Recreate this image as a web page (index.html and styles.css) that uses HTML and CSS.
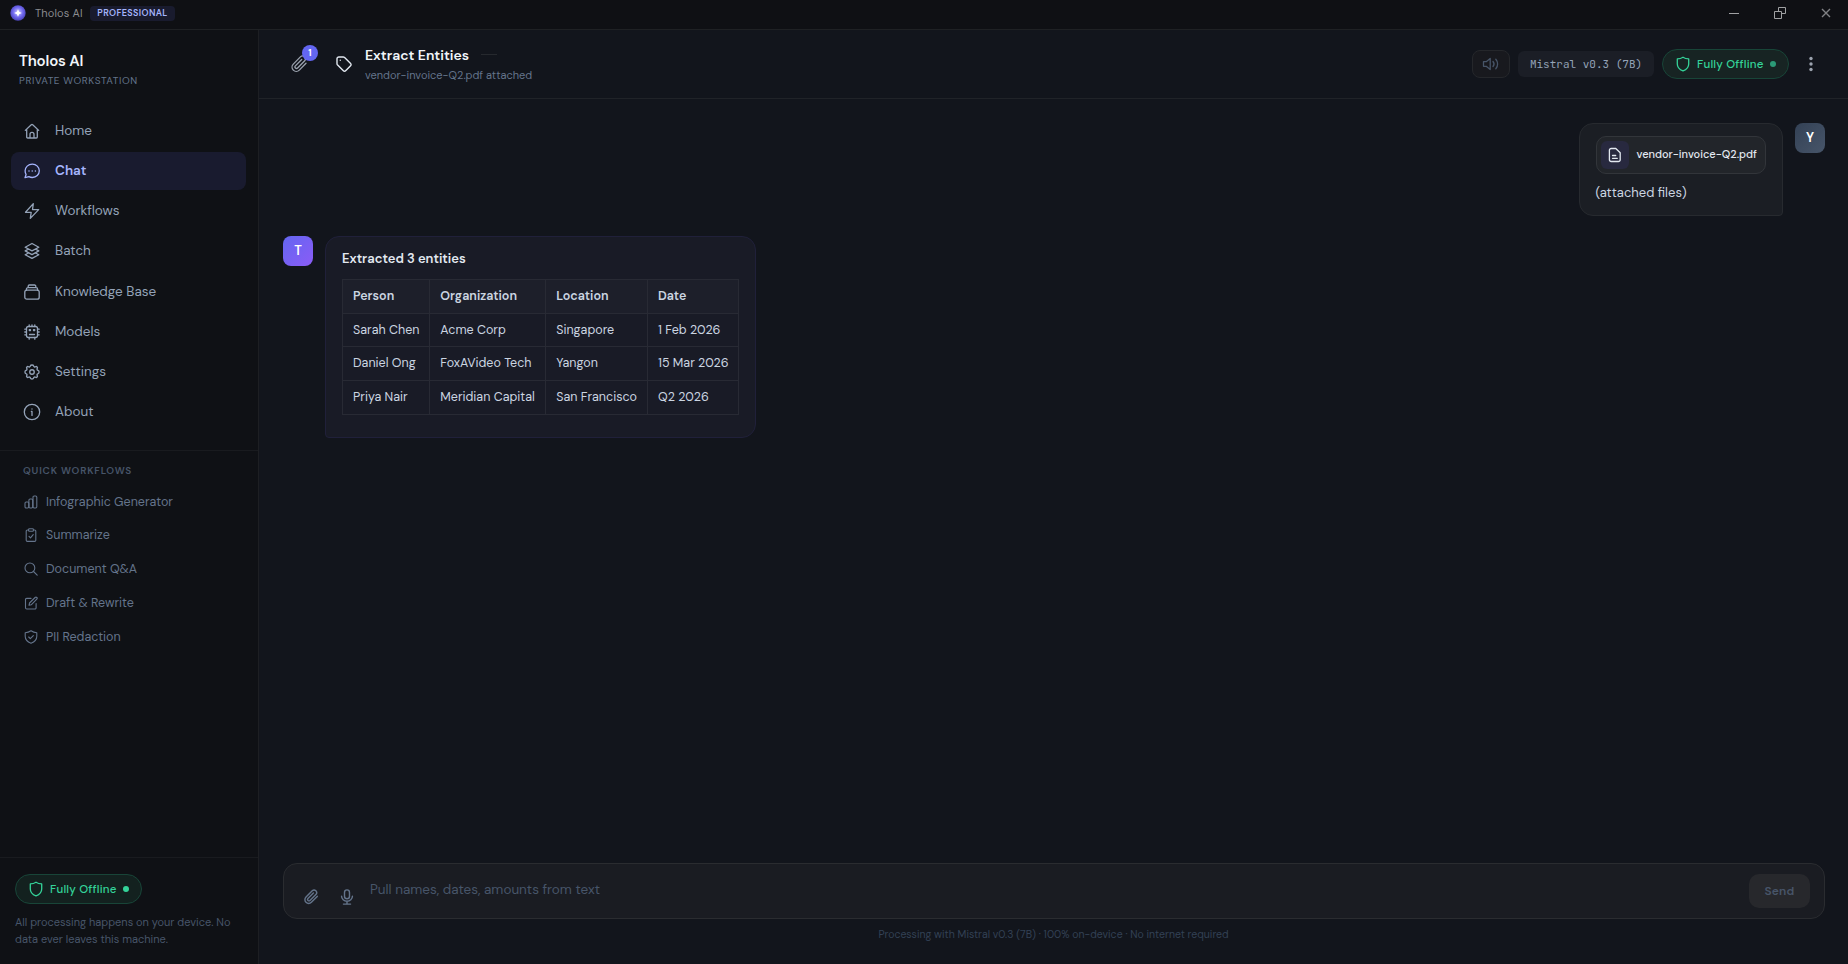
FILE: index.html
```html
<!DOCTYPE html>
<html lang="en">
<head>
  <meta charset="UTF-8">
  <title>Tholos AI</title>
  <link rel="stylesheet" href="styles.css">
</head>
<body>
  <div class="titlebar">
    <svg class="app-logo" viewBox="0 0 16 16">
      <defs>
        <radialGradient id="orb" cx="50%" cy="45%" r="55%">
          <stop offset="0" stop-color="#c9c5ff"/>
          <stop offset="0.6" stop-color="#6f67ee"/>
          <stop offset="1" stop-color="#4a43b8"/>
        </radialGradient>
      </defs>
      <circle cx="8" cy="8" r="7.7" fill="url(#orb)"/>
      <path d="M8 4.200 9.200 6.800 11.800 8 9.200 9.200 8 11.800 6.800 9.200 4.200 8 6.800 6.800Z" fill="#fff"/>
    </svg>
    <span class="app-name">Tholos AI</span>
    <span class="plan">PROFESSIONAL</span>
    <div class="window-buttons">
      <svg viewBox="0 0 12 12"><path d="M1 6.5h10"/></svg>
      <svg viewBox="0 0 12 12"><path d="M4.5 4.5v-4h7v6h-4M.5 4.5h7v7h-7z"/></svg>
      <svg class="close" viewBox="0 0 12 12"><path d="m2 2 8 8M10 2 2 10"/></svg>
    </div>
  </div>

  <div class="app">
    <div class="sidebar">
      <div class="brand">
        <div class="brand-name">Tholos AI</div>
        <div class="brand-sub">PRIVATE WORKSTATION</div>
      </div>

      <div class="nav">
        <a class="nav-item">
          <svg viewBox="0 0 18 18"><path d="m2.300 8.400 6-5.700a1.100 1.100 0 0 1 1.400 0l6 5.700M3.700 7.200V15a1 1 0 0 0 1 1h8.600a1 1 0 0 0 1-1V7.200M7 16v-3.600a2 2 0 0 1 4 0V16"/></svg>
          <span>Home</span>
        </a>
        <a class="nav-item active">
          <svg viewBox="0 0 18 18"><path d="M9.300 2.200c4 0 7 2.900 7 6.600s-3 6.700-7 6.700c-1.300 0-2.400-.3-3.400-.8L2 15.600l1.100-3.100c-.7-1.100-1-2.300-1-3.700 0-3.700 3.100-6.600 7.200-6.600Z"/><path d="M6 8.900h.01M9.200 8.900h.01M12.400 8.900h.01" class="dots"/></svg>
          <span>Chat</span>
        </a>
        <a class="nav-item">
          <svg viewBox="0 0 18 18"><path d="M10.300 1.600 2.500 10.300h5.700L7.300 16.400 15.700 7.600H9.500Z"/></svg>
          <span>Workflows</span>
        </a>
        <a class="nav-item">
          <svg viewBox="0 0 18 18"><path d="M9 1.500 2.200 5.200 9 8.900l6.800-3.700ZM5 7.400 2.200 8.900 9 12.600l6.800-3.700L13 7.400M5 11.200l-2.800 1.500L9 16.400l6.800-3.700-2.800-1.500"/></svg>
          <span>Batch</span>
        </a>
        <a class="nav-item">
          <svg viewBox="0 0 18 18"><rect x="1.800" y="7.200" width="14.400" height="9" rx="2"/><path d="M3.400 7.300V6.200a1.500 1.500 0 0 1 1.500-1.500h8.200a1.500 1.500 0 0 1 1.500 1.500v1.100M5.200 4.600V3.200a1.200 1.200 0 0 1 1.200-1.200h5.200a1.200 1.200 0 0 1 1.200 1.200v1.400"/></svg>
          <span>Knowledge Base</span>
        </a>
        <a class="nav-item">
          <svg viewBox="0 0 18 18"><rect x="3.500" y="3.500" width="11" height="11" rx="2"/><path d="M6.200 1.800v1.700M9 1.800v1.700M11.800 1.800v1.700M6.200 14.500v1.700M11.800 14.500v1.700M1.800 6.200h1.700M1.800 11.800h1.700M14.500 6.200h1.700M14.500 11.800h1.700M1.800 9h1.700M14.500 9h1.700M6.500 11.500h5M6.300 6.600h1.200v1H6.300zM10.500 6.600h1.200v1h-1.200z"/></svg>
          <span>Models</span>
        </a>
        <a class="nav-item">
          <svg viewBox="0 0 24 24" class="heavy"><path d="M9.900 3.900c.4-1.700 3.800-1.700 4.200 0a1.700 1.700 0 0 0 2.600 1.100c1.500-.9 3.200.8 2.300 2.300a1.700 1.700 0 0 0 1.100 2.600c1.700.4 1.700 3.800 0 4.200a1.700 1.700 0 0 0-1.100 2.600c.9 1.500-.8 3.200-2.300 2.300a1.700 1.700 0 0 0-2.600 1.100c-.4 1.700-3.800 1.700-4.200 0A1.700 1.700 0 0 0 7.300 19C5.800 19.900 4.100 18.200 5 16.700a1.700 1.700 0 0 0-1.100-2.600c-1.700-.4-1.700-3.800 0-4.200A1.700 1.700 0 0 0 5 7.300C4.100 5.800 5.800 4.100 7.300 5a1.700 1.700 0 0 0 2.600-1.100Z"/><circle cx="12" cy="12" r="3"/></svg>
          <span>Settings</span>
        </a>
        <a class="nav-item">
          <svg viewBox="0 0 18 18"><circle cx="9" cy="9" r="7.700"/><path d="M9 8.400v4M9 5.900v.1M8.400 8.400H9"/></svg>
          <span>About</span>
        </a>
      </div>

      <div class="quick">
        <div class="quick-title">QUICK WORKFLOWS</div>
        <a class="quick-item">
          <svg viewBox="0 0 14 14"><rect x="1" y="7" width="3.800" height="6" rx="1.200"/><rect x="4.900" y="4" width="3.800" height="9" rx="1.200"/><rect x="9" y="1" width="3.800" height="12" rx="1.200"/></svg>
          <span>Infographic Generator</span>
        </a>
        <a class="quick-item">
          <svg viewBox="0 0 14 14"><path d="M4.600 2H3.400A1.200 1.200 0 0 0 2.200 3.200v9A1.200 1.200 0 0 0 3.400 13.400h7.200a1.200 1.200 0 0 0 1.200-1.200v-9A1.200 1.200 0 0 0 10.600 2H9.400M5 8.300l1.500 1.500L9.200 6.600"/><rect x="4.600" y=".8" width="4.800" height="2.400" rx=".8"/></svg>
          <span>Summarize</span>
        </a>
        <a class="quick-item">
          <svg viewBox="0 0 14 14"><circle cx="5.900" cy="5.900" r="4.900"/><path d="m9.500 9.500 3.700 3.700"/></svg>
          <span>Document Q&amp;A</span>
        </a>
        <a class="quick-item">
          <svg viewBox="0 0 14 14"><path d="M7 2.400H2.700a1.200 1.200 0 0 0-1.200 1.200v8.200A1.200 1.200 0 0 0 2.700 13h8.200a1.200 1.200 0 0 0 1.200-1.200V7.500"/><path d="M5 9.300 5.500 7l5.600-5.500a1.200 1.200 0 0 1 1.700 1.700L7.200 8.800Z"/></svg>
          <span>Draft &amp; Rewrite</span>
        </a>
        <a class="quick-item">
          <svg viewBox="0 0 14 14"><path d="M7 .8c1.800 1.300 3.600 1.900 5.800 2v3.500c0 3.200-2.200 5.600-5.800 7-3.600-1.400-5.800-3.800-5.800-7V2.800c2.200-.1 4-.7 5.800-2ZM4.700 7l1.600 1.600 3-3"/></svg>
          <span>PII Redaction</span>
        </a>
      </div>

      <div class="sidebar-footer">
        <div class="offline">
          <svg viewBox="0 0 14 16"><path d="M7 1.200c1.700 1.100 3.500 1.600 5.700 1.700v5c0 3.200-2.100 5.500-5.700 6.900-3.600-1.400-5.700-3.700-5.700-6.900v-5C3.500 2.800 5.300 2.300 7 1.200Z"/></svg>
          <span>Fully Offline</span>
          <i></i>
        </div>
        <p>All processing happens on your device. No<br>data ever leaves this machine.</p>
      </div>
    </div>

    <div class="main">
      <div class="chat-header">
        <div class="attachments">
          <svg viewBox="0 0 18 18"><path d="m16 8.200-6.700 6.900a4.200 4.200 0 0 1-6-6l7.100-7.200a2.900 2.900 0 0 1 4.100 4.100l-6.900 7a1.500 1.500 0 0 1-2.200-2.100l6.300-6.400"/></svg>
          <span class="count">1</span>
        </div>
        <svg class="tag" viewBox="0 0 18 18"><path d="M2 3.800A1.800 1.800 0 0 1 3.800 2h4.500c.5 0 .9.200 1.300.5l6 6a1.500 1.500 0 0 1 0 2.200l-5 5a1.500 1.500 0 0 1-2.200 0l-6-6A1.700 1.700 0 0 1 2 8.500Z"/><path d="M5.300 5.300h.01"/></svg>
        <div class="chat-title">
          <h1>Extract Entities <span class="dash"></span></h1>
          <p>vendor-invoice-Q2.pdf attached</p>
        </div>
        <div class="header-tools">
          <button class="sound">
            <svg viewBox="0 0 18 16"><path d="M1.500 5.700h2.700l4-3.200v11l-4-3.200H1.500ZM11 5.500c1.200 1.400 1.200 3.600 0 5M13.800 3.200c2.400 2.700 2.400 6.900 0 9.600"/></svg>
          </button>
          <span class="model">Mistral v0.3 (7B)</span>
          <div class="offline dim">
            <svg viewBox="0 0 14 16"><path d="M7 1.200c1.700 1.100 3.500 1.600 5.700 1.700v5c0 3.200-2.100 5.500-5.700 6.900-3.600-1.400-5.700-3.700-5.700-6.900v-5C3.500 2.800 5.300 2.300 7 1.200Z"/></svg>
            <span>Fully Offline</span>
            <i></i>
          </div>
          <svg class="more" viewBox="0 0 4 16"><circle cx="2" cy="2.500" r="1.700"/><circle cx="2" cy="8" r="1.700"/><circle cx="2" cy="13.500" r="1.700"/></svg>
        </div>
      </div>

      <div class="messages">
        <div class="message user">
          <div class="bubble">
            <div class="file">
              <div class="file-icon">
                <svg viewBox="0 0 14 16"><path d="M3.200 1.500h4.600l4.400 4.300v6.900a1.800 1.800 0 0 1-1.800 1.800H3.200a1.800 1.800 0 0 1-1.800-1.800V3.300a1.800 1.800 0 0 1 1.800-1.800ZM4.500 8.500h3.200M4.500 11.300h4.800"/></svg>
              </div>
              <span>vendor-invoice-Q2.pdf</span>
            </div>
            <p>(attached files)</p>
          </div>
          <div class="avatar">Y</div>
        </div>

        <div class="message bot">
          <div class="avatar">T</div>
          <div class="bubble">
            <h2>Extracted 3 entities</h2>
            <table>
              <colgroup><col class="c1"><col class="c2"><col class="c3"><col class="c4"></colgroup>
              <tr><th>Person</th><th>Organization</th><th>Location</th><th>Date</th></tr>
              <tr><td>Sarah Chen</td><td>Acme Corp</td><td>Singapore</td><td>1 Feb 2026</td></tr>
              <tr><td>Daniel Ong</td><td>FoxAVideo Tech</td><td>Yangon</td><td>15 Mar 2026</td></tr>
              <tr><td>Priya Nair</td><td>Meridian Capital</td><td>San Francisco</td><td>Q2 2026</td></tr>
            </table>
          </div>
        </div>
      </div>

      <div class="composer">
        <div class="composer-icons">
          <svg viewBox="0 0 18 18"><path d="m16 8.300-6.600 6.700a4.200 4.200 0 0 1-6-6l7-7a2.900 2.900 0 0 1 4.100 4.100l-6.700 6.800a1.500 1.500 0 0 1-2.200-2.100l6.100-6.200"/></svg>
          <svg viewBox="0 0 18 18"><rect x="6.200" y="1" width="5.600" height="10" rx="2.800"/><path d="M2.900 8.200a6.100 5.600 0 0 0 12.200 0M9 13.800v3M5 17h8"/></svg>
        </div>
        <span class="placeholder">Pull names, dates, amounts from text</span>
        <button class="send">Send</button>
      </div>
      <div class="note">Processing with Mistral v0.3 (7B) · 100% on-device · No internet required</div>
    </div>
  </div>
</body>
</html>
```
FILE: styles.css
```css
* {
  box-sizing: border-box;
}

body {
  margin: 0;
  height: 964px;
  overflow: hidden;
  display: flex;
  flex-direction: column;
  background: #12151c;
  color: #e2e8f0;
  font-family: "DM Sans", Inter, "Liberation Sans", sans-serif;
  font-size: 14px;
}

p, h1, h2 {
  margin: 0;
}

button {
  font-family: inherit;
  border: none;
  padding: 0;
}

svg {
  fill: none;
  stroke: currentColor;
  stroke-width: 1.3;
  stroke-linecap: round;
  stroke-linejoin: round;
  flex-shrink: 0;
}

/* Title bar */
.titlebar {
  height: 30px;
  flex-shrink: 0;
  display: flex;
  align-items: center;
  padding: 0 16px 3px 10px;
  background: #0f1014;
  border-bottom: 1px solid #1f2124;
}

.app-logo {
  width: 16px;
  height: 16px;
  stroke: none;
}

.app-name {
  margin-left: 9px;
  width: 48px;
  font-size: 11px;
  letter-spacing: 0.15px;
  color: #8b8c90;
  white-space: nowrap;
}

.plan {
  margin-left: 7px;
  width: 85px;
  height: 15px;
  line-height: 14px;
  text-align: center;
  border-radius: 4px;
  background: #191b2e;
  color: #a5b4fc;
  font-size: 9px;
  font-weight: 600;
  letter-spacing: 0.36px;
}

.window-buttons {
  margin-left: auto;
  display: flex;
  gap: 34px;
  color: #a0a1a3;
}

.window-buttons svg {
  width: 12px;
  height: 12px;
  stroke-width: 1;
  stroke-linecap: butt;
  stroke-linejoin: miter;
}

.window-buttons .close {
  stroke-width: 1.4;
  color: #808184;
}

.app {
  flex: 1;
  display: flex;
  min-height: 0;
}

/* Sidebar */
.sidebar {
  width: 259px;
  flex-shrink: 0;
  display: flex;
  flex-direction: column;
  background: #0f1115;
  border-right: 1px solid #1d1f23;
}

.brand {
  padding: 21px 19px 0;
  height: 82px;
}

.brand-name {
  font-size: 15px;
  line-height: 20px;
  font-weight: 600;
  letter-spacing: -0.15px;
  color: #f1f5f9;
}

.brand-sub {
  margin-top: 2px;
  font-size: 10px;
  line-height: 16px;
  letter-spacing: 0.6px;
  color: #64748b;
}

.nav {
  padding: 0 12px 0 11px;
  height: 338px;
}

.nav-item {
  display: flex;
  align-items: center;
  height: 38.15px;
  margin-bottom: 2px;
  padding: 0 0 1.1px 12px;
  gap: 14px;
  border-radius: 8px;
  font-size: 13.5px;
  color: #94a3b8;
}

.nav-item svg {
  width: 18px;
  height: 18px;
  margin-top: 1px;
}

.nav-item svg.heavy {
  stroke-width: 1.8;
}

.nav-item .dots {
  stroke-width: 1.5;
}

.nav-item.active {
  background: #191b2f;
  color: #a5b4fc;
  font-weight: 600;
}

.quick {
  border-top: 1px solid #191b1f;
  padding: 11px 23px;
}

.quick-title {
  font-size: 10px;
  line-height: 18px;
  font-weight: 600;
  letter-spacing: 0.8px;
  color: #475569;
  margin-bottom: 4.7px;
}

.quick-item {
  display: flex;
  align-items: center;
  height: 33.8px;
  gap: 8.3px;
  font-size: 12.5px;
  color: #64748b;
}

.quick-item svg {
  width: 14px;
  height: 14px;
  margin-left: 0.7px;
  stroke-width: 1.1;
}

.sidebar-footer {
  margin-top: auto;
  height: 107px;
  border-top: 1px solid #191b1f;
  padding: 16px 15px;
}

.sidebar-footer p {
  margin-top: 10px;
  font-size: 11px;
  line-height: 17px;
  color: #475569;
  white-space: nowrap;
}

.offline {
  width: 127px;
  height: 30px;
  display: flex;
  align-items: center;
  padding-left: 13px;
  border: 1px solid #184538;
  border-radius: 15px;
  background: #13211f;
  color: #34d399;
  font-size: 11.5px;
  font-weight: 500;
  white-space: nowrap;
}

.offline svg {
  width: 14px;
  height: 16px;
}

.offline span {
  width: 67px;
  margin-left: 7px;
  letter-spacing: 0.2px;
}

.offline i {
  width: 6px;
  height: 6px;
  margin-left: 6px;
  border-radius: 50%;
  background: #34d399;
}

.offline.dim {
  background: #172423;
}

.offline.dim i {
  background: #2b9a76;
}

/* Chat */
.main {
  flex: 1;
  display: flex;
  flex-direction: column;
  min-width: 0;
  background: #12151c;
}

.chat-header {
  height: 69px;
  flex-shrink: 0;
  display: flex;
  align-items: center;
  padding: 0 34px 0 31px;
  border-bottom: 1px solid #202328;
}

.attachments {
  position: relative;
  width: 18px;
  height: 18px;
  color: #9ca3af;
}

.attachments svg {
  width: 18px;
  height: 18px;
}

.count {
  position: absolute;
  top: -10px;
  left: 12px;
  width: 16px;
  height: 16px;
  line-height: 16px;
  text-align: center;
  border-radius: 50%;
  background: #6366f1;
  color: #fff;
  font-size: 9px;
  font-weight: 700;
}

.tag {
  width: 18px;
  height: 18px;
  margin-left: 27px;
  stroke-width: 1.4;
}

.chat-title {
  margin-left: 12px;
}

.chat-title h1 {
  display: flex;
  align-items: center;
  font-size: 14px;
  line-height: 20px;
  font-weight: 600;
  color: #f1f5f9;
}

.dash {
  width: 16px;
  height: 1px;
  margin-left: 12px;
  background: #26292e;
}

.chat-title p {
  padding-top: 1px;
  font-size: 11px;
  line-height: 18px;
  color: #64748b;
}

.header-tools {
  margin-left: auto;
  display: flex;
  align-items: center;
  gap: 8px;
}

.sound {
  width: 38px;
  height: 28px;
  display: flex;
  align-items: center;
  justify-content: center;
  border: 1px solid #25272b;
  border-radius: 8px;
  background: #18191e;
  color: #475569;
}

.sound svg {
  width: 18px;
  height: 16px;
}

.model {
  width: 136px;
  height: 26px;
  line-height: 26px;
  text-align: center;
  border-radius: 6px;
  background: #1b1e26;
  color: #94a3b8;
  font-family: "JetBrains Mono", "DejaVu Sans Mono", monospace;
  font-size: 11px;
}

.more {
  width: 4px;
  height: 16px;
  margin: 0 1px 0 12px;
  fill: #9ca3af;
  stroke: none;
}

.messages {
  flex: 1;
  padding: 24px 23px 0 24px;
}

.message {
  display: flex;
  align-items: flex-start;
  gap: 12px;
}

.message.user {
  justify-content: flex-end;
  margin-bottom: 20px;
}

.avatar {
  width: 30px;
  height: 30px;
  line-height: 29px;
  text-align: center;
  border-radius: 8px;
  background: linear-gradient(135deg, #334155, #475569);
  color: #fff;
  font-size: 13px;
  font-weight: 600;
}

.bot .avatar {
  background: linear-gradient(135deg, #6366f1, #8b5cf6);
}

.user .bubble {
  width: 204px;
  height: 93px;
  padding: 12px 16px;
  border: 1px solid #272a2f;
  border-radius: 14px 14px 4px 14px;
  background: #1b1e24;
}

.user .bubble p {
  margin: 8px 0 0 -0.6px;
  line-height: 21px;
  font-size: 13px;
  color: #cbd5e1;
}

.file {
  width: 170px;
  height: 38px;
  display: flex;
  align-items: center;
  gap: 7.5px;
  padding-left: 4px;
  border: 1px solid #32353a;
  border-radius: 10px;
  background: #22252a;
  font-size: 11px;
  font-weight: 500;
  white-space: nowrap;
}

.file span {
  margin-bottom: 2px;
}

.file-icon {
  width: 28px;
  height: 28px;
  display: flex;
  align-items: center;
  justify-content: center;
  border-radius: 6px;
  background: #28293f;
}

.file-icon svg {
  width: 14px;
  height: 16px;
}

.bot .bubble {
  width: 431px;
  height: 202px;
  padding: 11px 16px;
  border: 1px solid #20203a;
  border-radius: 14px 14px 14px 4px;
  background: #191b26;
}

.bubble h2 {
  font-size: 13px;
  line-height: 21px;
  font-weight: 600;
  color: #e2e8f0;
}

table {
  margin-top: 9.8px;
  width: 397px;
  table-layout: fixed;
  border-collapse: collapse;
  font-size: 12.5px;
  line-height: 18.75px;
  color: #cbd5e1;
}

.c1 { width: 87.3px; }
.c2 { width: 115.9px; }
.c3 { width: 101.8px; }
.c4 { width: 91px; }

th, td {
  padding: 7px 10px;
  border: 1px solid #282a34;
  text-align: left;
  white-space: nowrap;
}

th {
  background: #1d1f2a;
  font-weight: 600;
}

/* Message input */
.composer {
  height: 56px;
  margin: 0 23px 0 24px;
  flex-shrink: 0;
  display: flex;
  border: 1px solid #2a2c30;
  border-radius: 14px;
  background: #1a1c22;
}

.composer-icons {
  display: flex;
  gap: 20px;
  padding: 25px 0 0 19px;
  color: #64748b;
}

.composer-icons svg {
  width: 16px;
  height: 16px;
  stroke-width: 1.6;
}

.placeholder {
  margin-left: 15px;
  padding-top: 15px;
  line-height: 22px;
  font-size: 13.5px;
  color: #475569;
}

.send {
  width: 61px;
  height: 34px;
  margin: 10px 14px 0 auto;
  border-radius: 10px;
  background: #27282c;
  color: #475569;
  font-size: 12px;
  font-weight: 600;
  letter-spacing: 0.2px;
}

.note {
  height: 45px;
  padding-top: 8px;
  line-height: 16px;
  text-align: center;
  font-size: 10.5px;
  color: #334155;
}
```
